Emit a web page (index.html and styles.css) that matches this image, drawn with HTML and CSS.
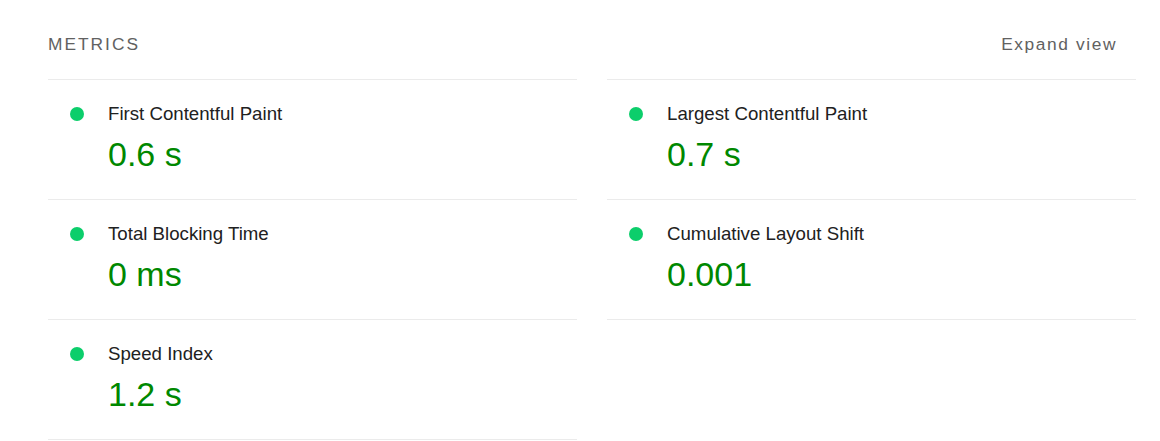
FILE: index.html
```html
<!DOCTYPE html>
<html lang="en">
<head>
    <meta charset="UTF-8">
    <meta name="viewport" content="width=device-width, initial-scale=1.0">
    <title>Metrics</title>
    <link rel="stylesheet" href="styles.css">
</head>
<body>
    <section class="metrics-group">
        <div class="metrics-header">
            <span class="metrics-title">METRICS</span>
            <span class="metrics-toggle">Expand view</span>
        </div>

        <div class="metrics">
            <div class="metric">
                <span class="metric-dot"></span>
                <span class="metric-name">First Contentful Paint</span>
                <span class="metric-value">0.6 s</span>
            </div>
            <div class="metric">
                <span class="metric-dot"></span>
                <span class="metric-name">Largest Contentful Paint</span>
                <span class="metric-value">0.7 s</span>
            </div>
            <div class="metric">
                <span class="metric-dot"></span>
                <span class="metric-name">Total Blocking Time</span>
                <span class="metric-value">0 ms</span>
            </div>
            <div class="metric">
                <span class="metric-dot"></span>
                <span class="metric-name">Cumulative Layout Shift</span>
                <span class="metric-value">0.001</span>
            </div>
            <div class="metric">
                <span class="metric-dot"></span>
                <span class="metric-name">Speed Index</span>
                <span class="metric-value">1.2 s</span>
            </div>
        </div>
    </section>
</body>
</html>
```

FILE: styles.css
```css
body {
    font-family: "Liberation Sans", Arial, sans-serif;
    background-color: #ffffff;
    color: #212121;
    margin: 0;
    padding: 0;
}

.metrics-group {
    padding: 0 24px 0 48px;
}

.metrics-header {
    display: flex;
    justify-content: space-between;
    align-items: baseline;
    padding: 32px 20px 23px 0;
    font-size: 17.33px;
    line-height: 24px;
    letter-spacing: 2px;
    color: #616161;
}

.metrics-toggle {
    letter-spacing: 1.6px;
    margin-right: -1px;
}

.metrics {
    display: grid;
    grid-template-columns: 1fr 1fr;
    column-gap: 30px;
}

.metric {
    display: grid;
    grid-template-columns: 14px 1fr;
    column-gap: 24px;
    padding: 21px 0 21px 22px;
    border-bottom: 1px solid #ebebeb;
}

.metric:nth-child(-n+2) {
    border-top: 1px solid #ebebeb;
}

.metric-dot {
    width: 14px;
    height: 14px;
    border-radius: 50%;
    background-color: #0cce6b;
    align-self: center;
}

.metric-name {
    font-size: 18.67px;
    line-height: 26px;
    color: #212121;
}

.metric-value {
    grid-column: 2;
    margin-top: 3px;
    font-size: 34px;
    line-height: 48px;
    color: #008800;
}
```
